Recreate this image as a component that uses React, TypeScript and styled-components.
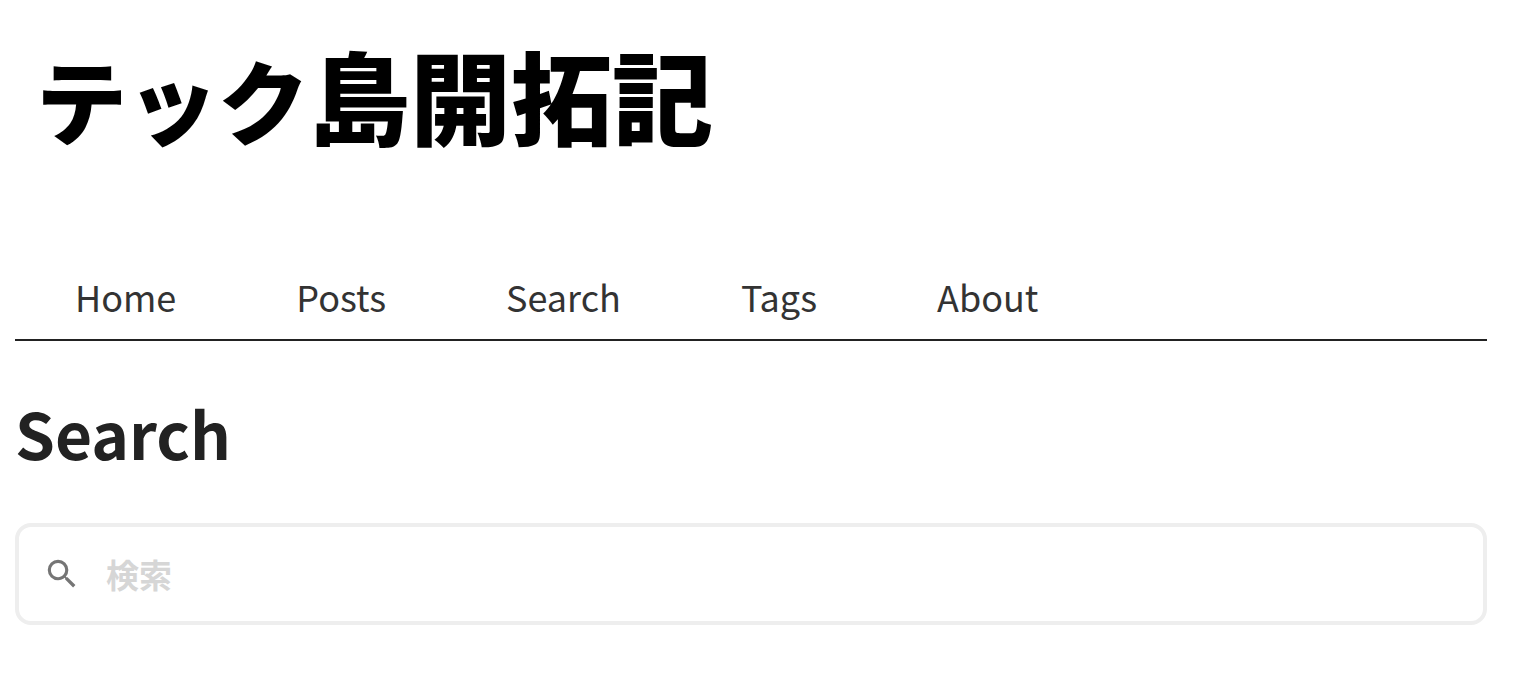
import React from 'react';
import styled, { createGlobalStyle } from 'styled-components';

const Global = createGlobalStyle`
  * { box-sizing: border-box; }
  body {
    margin: 0;
    background: #fff;
    color: #222;
    font-family: "Noto Sans CJK JP", "Noto Sans", sans-serif;
  }
`;
const Page = styled.div`
  padding: 24px 32px 52px 15px;
`;
const Brand = styled.a`
  display: block;
  width: max-content;
  margin-bottom: 91px;
  padding-left: 21px;
  color: #000;
  font-size: 101px;
  line-height: 140px;
  font-weight: 900;
  text-decoration: none;
  white-space: nowrap;
`;
const Kana = styled.span`
  font-size: 91px;
`;
const Nav = styled.nav`
  display: flex;
  gap: 120px;
  padding: 0 60px 6px;
  border-bottom: 2px solid #222;
`;
const NavLink = styled.a`
  color: #333;
  font-size: 36px;
  line-height: 74px;
  text-decoration: none;
`;
const Title = styled.h1`
  margin: 48px 0;
  font-size: 64px;
  line-height: 86px;
  font-weight: 700;
`;
const SearchBox = styled.label`
  display: flex;
  align-items: center;
  gap: 25px;
  height: 102px;
  padding: 0 24px;
  border: 4px solid #eee;
  border-radius: 16px;
`;
const Input = styled.input`
  flex: 1;
  min-width: 0;
  padding: 0;
  border: 0;
  outline: 0;
  background: transparent;
  color: #222;
  font-family: inherit;
  font-size: 33px;
  font-weight: 700;
  &::placeholder { color: #d6d6d6; opacity: 1; }
`;

const links = ['Home', 'Posts', 'Search', 'Tags', 'About'];

export default function App() {
  return (
    <Page>
      <Global />
      <header>
        <Brand href="#"><Kana>テック</Kana>島開拓記</Brand>
        <Nav>{links.map((l) => <NavLink key={l} href={`#${l.toLowerCase()}`}>{l}</NavLink>)}</Nav>
      </header>
      <main>
        <Title>Search</Title>
        <SearchBox>
          <svg width="38" height="38" viewBox="0 0 24 24" fill="#757575" aria-hidden="true">
            <path d="M15.5 14h-.79l-.28-.27A6.471 6.471 0 0 0 16 9.5 6.5 6.5 0 1 0 9.5 16c1.61 0 3.09-.59 4.23-1.57l.27.28v.79l5 4.99L20.49 19l-4.99-5zm-6 0C7.01 14 5 11.99 5 9.5S7.01 5 9.5 5 14 7.01 14 9.5 11.99 14 9.5 14z" />
          </svg>
          <Input type="search" placeholder="検索" aria-label="検索" />
        </SearchBox>
      </main>
    </Page>
  );
}
